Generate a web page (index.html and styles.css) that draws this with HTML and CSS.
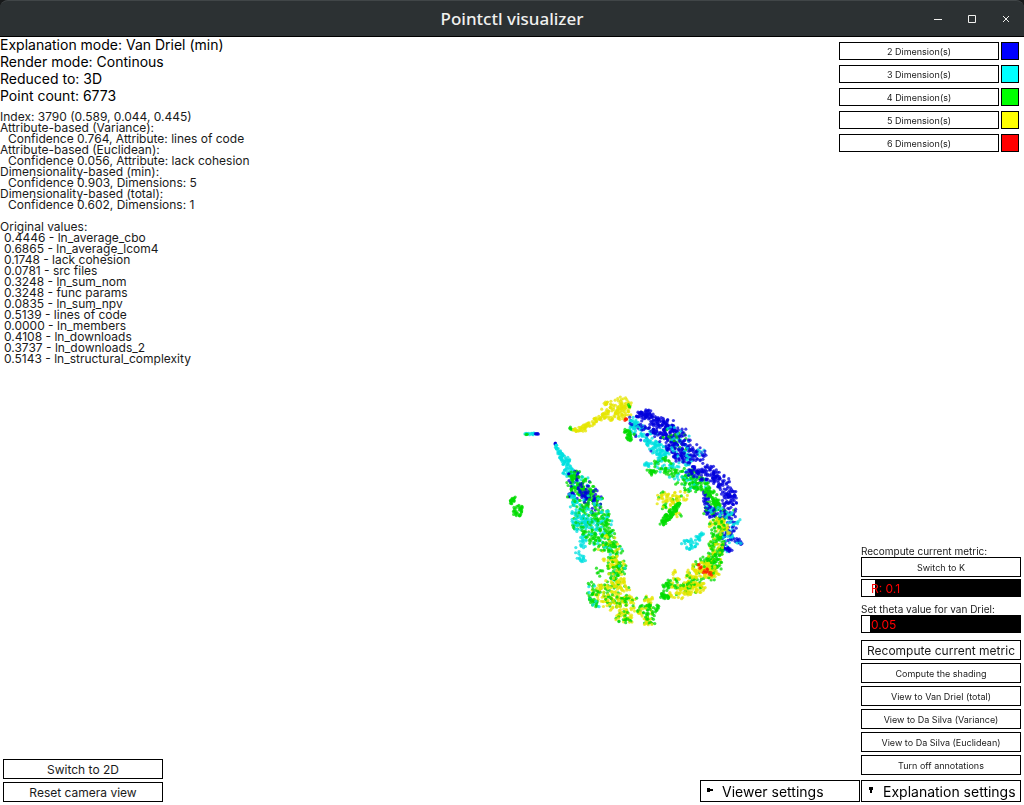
FILE: index.html
```html
<!DOCTYPE html>
<html lang="en">
<head>
<meta charset="utf-8">
<title>Pointctl visualizer</title>
<link rel="stylesheet" href="styles.css">
</head>
<body>
<header class="titlebar">
  <h1 class="title">Pointctl visualizer</h1>
  <div class="window-controls">
    <button type="button" aria-label="Minimize"><svg viewBox="0 0 10 10"><path d="M1 5.500H9" /></svg></button>
    <button type="button" aria-label="Maximize"><svg viewBox="0 0 10 10"><path d="M1.500 1.500H8.500V8.500H1.500Z" /></svg></button>
    <button type="button" aria-label="Close"><svg viewBox="0 0 10 10"><path d="M2 2L8 8M8 2L2 8" /></svg></button>
  </div>
</header>
<main class="scene">
  <canvas class="cloud" id="cloud" width="250" height="250" role="img" aria-label="Point cloud"></canvas>

  <div class="side left">
    <section>
      <ul class="status">
        <li>Explanation mode: Van Driel (min)</li>
        <li>Render mode: Continous</li>
        <li>Reduced to: 3D</li>
        <li>Point count: 6773</li>
      </ul>
      <dl class="details">
        <dt>Index: 3790 (0.589, 0.044, 0.445)</dt>
        <dt>Attribute-based (Variance):</dt>
        <dd>Confidence 0.764, Attribute: lines of code</dd>
        <dt>Attribute-based (Euclidean):</dt>
        <dd>Confidence 0.056, Attribute: lack cohesion</dd>
        <dt>Dimensionality-based (min):</dt>
        <dd>Confidence 0.903, Dimensions: 5</dd>
        <dt>Dimensionality-based (total):</dt>
        <dd>Confidence 0.602, Dimensions: 1</dd>
      </dl>
      <div class="values">
        <p>Original values:</p>
        <ul>
          <li>0.4446 - ln_average_cbo</li>
          <li>0.6865 - ln_average_lcom4</li>
          <li>0.1748 - lack cohesion</li>
          <li>0.0781 - src files</li>
          <li>0.3248 - ln_sum_nom</li>
          <li>0.3248 - func params</li>
          <li>0.0835 - ln_sum_npv</li>
          <li>0.5139 - lines of code</li>
          <li>0.0000 - ln_members</li>
          <li>0.4108 - ln_downloads</li>
          <li>0.3737 - ln_downloads_2</li>
          <li>0.5143 - ln_structural_complexity</li>
        </ul>
      </div>
    </section>
    <div class="camera">
      <button type="button" class="btn medium">Switch to 2D</button>
      <button type="button" class="btn medium">Reset camera view</button>
    </div>
  </div>

  <div class="side right">
    <ul class="legend">
      <li><button type="button" class="btn">2 Dimension(s)</button><span class="swatch blue"></span></li>
      <li><button type="button" class="btn">3 Dimension(s)</button><span class="swatch cyan"></span></li>
      <li><button type="button" class="btn">4 Dimension(s)</button><span class="swatch green"></span></li>
      <li><button type="button" class="btn">5 Dimension(s)</button><span class="swatch yellow"></span></li>
      <li><button type="button" class="btn">6 Dimension(s)</button><span class="swatch red"></span></li>
    </ul>
    <div class="settings">
      <button type="button" class="btn tab" aria-expanded="false">
        <svg viewBox="0 0 6 6"><path d="M0 1H3V2H6V4H3V5H0Z" /></svg>Viewer settings
      </button>
      <div class="explanation">
        <div class="field">
          <label for="radius">Recompute current metric:</label>
          <button type="button" class="btn">Switch to K</button>
          <div class="slider">
            <input type="range" class="radius" id="radius" min="0" max="1" step="0.01" value="0.1">
            <output for="radius">R: 0.1</output>
          </div>
        </div>
        <div class="field">
          <label for="theta">Set theta value for van Driel:</label>
          <div class="slider">
            <input type="range" class="theta" id="theta" min="0" max="1" step="0.01" value="0.05">
            <output for="theta">0.05</output>
          </div>
        </div>
        <div class="actions">
          <button type="button" class="btn medium">Recompute current metric</button>
          <button type="button" class="btn">Compute the shading</button>
          <button type="button" class="btn">View to Van Driel (total)</button>
          <button type="button" class="btn">View to Da Silva (Variance)</button>
          <button type="button" class="btn">View to Da Silva (Euclidean)</button>
          <button type="button" class="btn">Turn off annotations</button>
        </div>
        <button type="button" class="btn tab" aria-expanded="true">
          <svg viewBox="0 0 6 6"><path d="M1 0H5V3H4V6H2V3H1Z" /></svg>Explanation settings
        </button>
      </div>
    </div>
  </div>
</main>
<script src="cloud.js"></script>
</body>
</html>
```

FILE: styles.css
```css
* { box-sizing: border-box; }

html { background: linear-gradient(#17191a 20px, #fff 20px); }

body {
  margin: 0;
  min-height: 100vh;
  display: flex;
  flex-direction: column;
  color: #000;
  font-family: Inter, "Noto Sans", sans-serif;
}

ul, dl, dd, p { margin: 0; padding: 0; list-style: none; }

.titlebar {
  display: grid;
  grid-template-columns: 1fr auto 1fr;
  align-items: center;
  height: 37px;
  padding: 0 9px;
  background: #2c3133;
  border-top: 1px solid #414648;
  border-bottom: 1px solid #000;
  border-radius: 8px 8px 0 0;
  color: #f0f0ee;
}

.title {
  grid-column: 2;
  margin: 0;
  font: 500 17px/24px "Noto Sans", "Open Sans", sans-serif;
}

.window-controls {
  display: flex;
  justify-content: flex-end;
  gap: 16px;
}

.window-controls button {
  display: grid;
  place-items: center;
  width: 18px;
  height: 24px;
  padding: 0;
  border: 0;
  background: none;
  color: inherit;
}

.window-controls svg {
  width: 10px;
  height: 10px;
  fill: none;
  stroke: currentColor;
}

.scene {
  position: relative;
  flex: 1;
  display: flex;
  justify-content: space-between;
  background: #fff;
}

.cloud {
  position: absolute;
  left: calc(50% - 12px);
  top: calc(50% - 31px);
}

.side {
  position: relative;
  display: flex;
  flex-direction: column;
  justify-content: space-between;
  gap: 24px;
  padding-bottom: 3px;
}

.right { align-items: flex-end; padding-right: 3px; }

.status { font-size: 14px; line-height: 17px; margin-top: -1px; }

.details, .values { font-size: 12px; line-height: 11px; color: #1a1a1a; }
.details { padding-top: 7px; }
.details dd { padding-left: 8px; }
.values { padding-top: 11px; }
.values li { padding-left: 4px; }

.btn {
  width: 160px;
  height: 20px;
  padding: 1px 0 0;
  border: 1px solid #000;
  border-radius: 0;
  background: #fff;
  color: #1a1a1a;
  font: 9px/16px Inter, "Noto Sans", sans-serif;
  text-align: center;
  white-space: nowrap;
}

.btn.medium { padding-top: 2px; font-size: 12px; }

.camera, .actions {
  display: flex;
  flex-direction: column;
  gap: 3px;
}

.camera { padding-left: 3px; }

.legend {
  display: flex;
  flex-direction: column;
  gap: 5px;
  padding: 5px 2px 0 0;
}

.legend li { display: flex; gap: 2px; }
.legend .btn { height: 18px; }

.swatch { width: 18px; height: 18px; border: 1px solid #000; }
.blue { background: #00f; }
.cyan { background: #0ff; }
.green { background: #0f0; }
.yellow { background: #ff0; }
.red { background: #f00; }

.settings { display: flex; align-items: flex-end; gap: 1px; }

.explanation { display: flex; flex-direction: column; width: 160px; }

.field {
  display: flex;
  flex-direction: column;
  margin-bottom: 6px;
}

.field label { font-size: 10px; line-height: 12px; color: #1a1a1a; }
.field .btn { margin-bottom: 2px; }

.slider { position: relative; height: 18px; }

.slider input {
  display: block;
  appearance: none;
  width: 100%;
  height: 18px;
  margin: 0;
  border: 1px solid #000;
}

.slider input::-webkit-slider-thumb { appearance: none; width: 1px; height: 16px; }
.radius { background: linear-gradient(90deg, #fff 13px, #000 13px); }
.theta { background: linear-gradient(90deg, #fff 8px, #000 8px); }

.slider output {
  position: absolute;
  left: 10px;
  top: 2px;
  color: #f00;
  font-size: 12px;
  line-height: 16px;
  pointer-events: none;
}

.actions { padding-top: 1px; margin-bottom: 5px; }

.btn.tab {
  display: flex;
  align-items: center;
  gap: 9px;
  height: 22px;
  padding: 2px 0 0 6px;
  color: #000;
  font-size: 14px;
}

.tab svg { flex: none; width: 6px; height: 6px; margin-bottom: 4px; }
```

FILE: cloud.js
```js
const ctx = document.getElementById("cloud").getContext("2d");
ctx.translate(-500, -390);

const palette = {
  b: "#0000dc", c: "#00e0e0", g: "#00dc00", y: "#e6e600", r: "#ff1e00"
};

let seed = 3790;
function random() {
  seed = (seed * 1664525 + 1013904223) >>> 0;
  return seed / 4294967296;
}

// Each strand: point count, colour mix, then nodes of x, y, spread.
const strands = [
  [14, "c", [525, 434, 1], [534, 434, 1]],
  [2, "g", [525, 434, 1], [529, 434, 0]],
  [5, "b", [536, 434, 1], [538, 434, 1]],
  [4, "b", [555, 443, 0], [556, 444, 1]],
  [75, "c", [556, 446, 1], [560, 454, 2], [565, 460, 4], [570, 467, 3]],
  [4, "g", [570, 428, 1], [573, 430, 1]],
  [75, "y", [573, 430, 1], [583, 429, 3], [590, 424, 3], [600, 418, 2], [608, 414, 5]],
  [75, "y", [608, 412, 7], [616, 411, 9], [626, 411, 6]],
  [30, "y", [617, 403, 6], [626, 404, 6]],
  [9, "y", [604, 403, 2], [609, 402, 2]],
  [3, "g", [628, 405, 1], [631, 407, 1]],
  [5, "r", [626, 419, 1], [626, 421, 1]],
  [22, "g", [513, 495, 2], [513, 499, 2], [511, 504, 1]],
  [34, "g", [514, 509, 2], [515, 514, 2], [519, 515, 2], [522, 509, 3], [517, 507, 2]],

  [28, "c", [566, 472, 3], [572, 474, 5]],
  [130, "ggggcb", [573, 474, 4], [577, 483, 10], [584, 495, 13]],
  [85, "gggb", [580, 486, 9], [592, 493, 7], [594, 503, 9]],
  [30, "b", [568, 495, 2], [581, 493, 7], [590, 498, 5]],
  [55, "ccgc", [571, 496, 4], [578, 507, 9], [584, 516, 10]],
  [30, "gcb", [592, 500, 8], [594, 510, 8]],
  [110, "ggcc", [589, 512, 9], [597, 519, 14], [602, 526, 12]],
  [70, "ccg", [578, 514, 7], [580, 531, 7]],
  [35, "c", [584, 537, 3], [579, 549, 5], [583, 560, 4]],
  [100, "gggc", [590, 528, 9], [601, 531, 13], [604, 540, 10]],
  [75, "gggcy", [596, 542, 8], [612, 544, 8], [617, 552, 6]],
  [60, "yyyg", [610, 559, 7], [618, 566, 7]],
  [60, "gggcy", [612, 573, 7], [621, 567, 5], [614, 583, 6]],
  [55, "yyyg", [616, 579, 8], [621, 590, 8]],
  [90, "yyyg", [597, 592, 6], [608, 592, 11], [619, 602, 10]],
  [42, "gggc", [594, 584, 6], [592, 597, 4], [598, 607, 4]],
  [7, "g", [596, 568, 3], [603, 575, 3]],
  [70, "yyyg", [606, 599, 7], [625, 607, 9], [629, 612, 7]],
  [26, "ygg", [621, 602, 4], [632, 598, 5]],
  [30, "ygy", [618, 617, 5], [631, 621, 4]],
  [65, "gyg", [640, 611, 3], [647, 612, 8], [655, 607, 4]],
  [25, "yg", [647, 621, 4], [651, 623, 4]],
  [14, "yyg", [644, 598, 2], [654, 602, 4]],

  [110, "ccccb", [632, 419, 3], [636, 430, 6], [650, 437, 9], [658, 446, 8]],
  [75, "c", [649, 444, 6], [664, 450, 7], [660, 456, 5]],
  [35, "g", [626, 430, 2], [630, 435, 4], [630, 440, 1]],
  [60, "b", [637, 415, 3], [649, 414, 4], [656, 422, 6]],
  [150, "b", [646, 418, 7], [655, 428, 10], [668, 428, 9], [671, 434, 7]],
  [100, "bbbcgb", [664, 436, 7], [680, 436, 9], [686, 450, 8]],
  [110, "bbbbc", [668, 447, 5], [681, 453, 10], [693, 452, 8], [702, 455, 5]],
  [50, "bbc", [670, 447, 5], [682, 459, 7], [690, 460, 4]],
  [60, "gggc", [655, 466, 5], [665, 464, 7], [672, 470, 6]],
  [10, "c", [646, 464, 2], [648, 466, 2]],
  [16, "g", [650, 471, 3], [653, 474, 3]],
  [85, "ggccg", [674, 471, 7], [686, 480, 9], [692, 487, 7]],
  [75, "gggc", [690, 474, 6], [700, 484, 8], [704, 486, 4]],
  [95, "b", [690, 470, 5], [703, 472, 8], [715, 474, 6]],
  [105, "b", [713, 478, 5], [723, 482, 7], [729, 494, 7], [730, 504, 6]],
  [55, "bbbg", [706, 490, 3], [708, 510, 4], [716, 516, 5]],
  [70, "g", [707, 489, 4], [714, 499, 5], [718, 508, 3]],
  [60, "gyyyy", [658, 495, 3], [670, 498, 7], [685, 496, 5]],
  [17, "yyg", [660, 505, 3], [669, 504, 5]],
  [8, "gyy", [677, 513, 2], [679, 516, 3]],
  [100, "g", [679, 503, 1], [673, 511, 3], [667, 518, 3], [662, 524, 2]],

  [60, "bbcg", [707, 511, 4], [720, 514, 6], [733, 513, 5]],
  [40, "bccb", [724, 516, 5], [734, 520, 6], [730, 528, 5]],
  [50, "ccb", [723, 533, 5], [728, 538, 5], [733, 531, 3]],
  [15, "cbb", [736, 539, 3], [741, 544, 2]],
  [28, "bbc", [722, 547, 4], [729, 550, 4]],
  [65, "yyg", [711, 523, 4], [722, 523, 5], [725, 531, 5]],
  [95, "gyg", [717, 530, 5], [716, 543, 7], [719, 556, 6]],
  [85, "gggy", [705, 559, 5], [715, 560, 7], [714, 570, 6]],
  [105, "yyyyyg", [697, 566, 6], [705, 570, 8], [714, 574, 6]],
  [15, "r", [699, 564, 2], [704, 570, 3], [713, 577, 3]],
  [80, "yyyg", [690, 572, 5], [697, 585, 7], [702, 588, 4]],
  [65, "yyyg", [682, 588, 5], [692, 588, 7], [680, 594, 5]],
  [13, "y", [667, 594, 3], [680, 596, 3]],
  [24, "gy", [669, 584, 3], [678, 582, 6]],
  [42, "g", [668, 579, 4], [666, 588, 3], [663, 596, 3], [668, 598, 2]],
  [5, "y", [674, 574, 2], [675, 571, 1]],
  [38, "c", [683, 542, 2], [691, 544, 6], [697, 539, 3], [703, 534, 2]],
  [8, "c", [689, 549, 2], [693, 548, 3]]
];

ctx.globalAlpha = 0.75;
for (const [count, mix, ...nodes] of strands) {
  for (let i = 0; i < count; i++) {
    const t = random() * (nodes.length - 1);
    const a = nodes[Math.floor(t)];
    const b = nodes[Math.floor(t) + 1];
    const f = t % 1;
    const angle = random() * Math.PI * 2;
    const spread = (a[2] + (b[2] - a[2]) * f) * Math.sqrt(random()) * 1.15;
    const x = a[0] + (b[0] - a[0]) * f + Math.cos(angle) * spread;
    const y = a[1] + (b[1] - a[1]) * f + Math.sin(angle) * spread;
    ctx.fillStyle = palette[mix[Math.floor(random() * mix.length)]];
    ctx.beginPath();
    ctx.arc(x, y, 1.6, 0, Math.PI * 2);
    ctx.fill();
  }
}
```
